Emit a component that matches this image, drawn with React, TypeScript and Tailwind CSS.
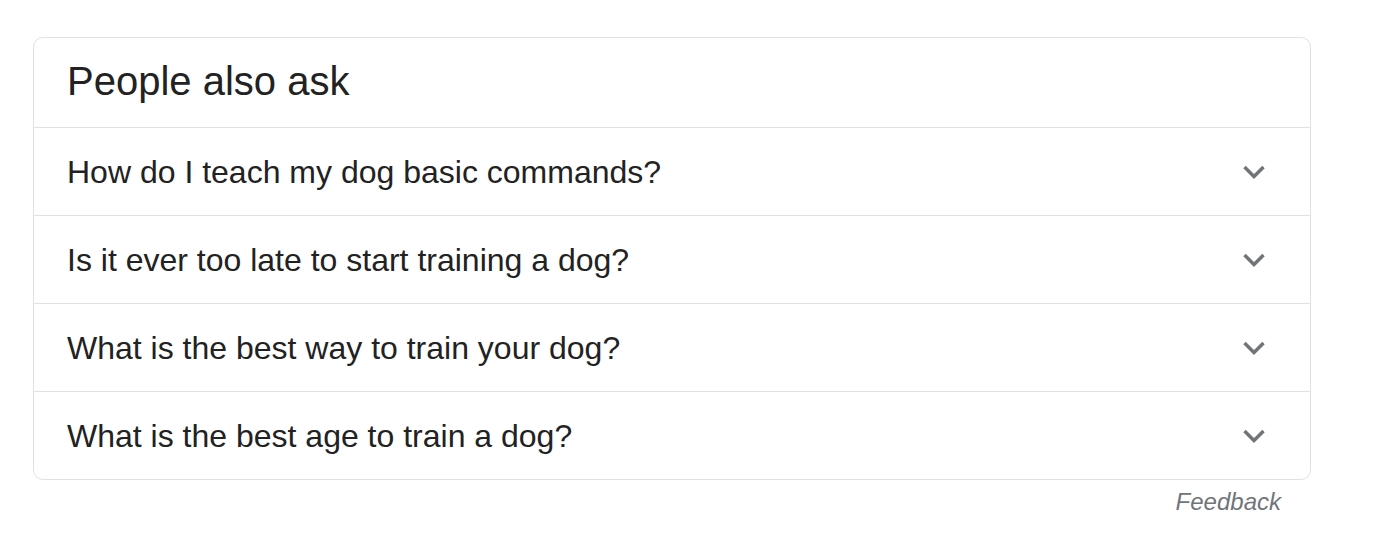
const questions = [
  "How do I teach my dog basic commands?",
  "Is it ever too late to start training a dog?",
  "What is the best way to train your dog?",
  "What is the best age to train a dog?",
];

function Chevron() {
  return (
    <svg width="24" height="24" viewBox="0 0 24 24" className="text-[#70757a]">
      <path d="M2.5 7 12 16.5 21.5 7" fill="none" stroke="currentColor" strokeWidth="3.5" />
    </svg>
  );
}

export default function App() {
  return (
    <div className="min-h-[550px] bg-white font-['Liberation_Sans',Arial,sans-serif] text-[#222]">
      <div className="pl-[33px] pt-[37px] w-[1311px]">
        <div className="rounded-[10px] border border-[#dfe1e5]">
          <div className="h-[89px] flex items-center px-[33px]">
            <h2 className="text-[40px] leading-none -mt-[4px]">People also ask</h2>
          </div>
          {questions.map((q) => (
            <div
              key={q}
              className="h-[88px] border-t border-[#dfe1e5] flex items-center justify-between pl-[33px] pr-[44px]"
            >
              <span className="text-[32px] leading-none">{q}</span>
              <Chevron />
            </div>
          ))}
        </div>
        <div className="flex justify-end pr-[30px] pt-[6px]">
          <span className="italic text-[24px] leading-[32px] text-[#70757a]">Feedback</span>
        </div>
      </div>
    </div>
  );
}
